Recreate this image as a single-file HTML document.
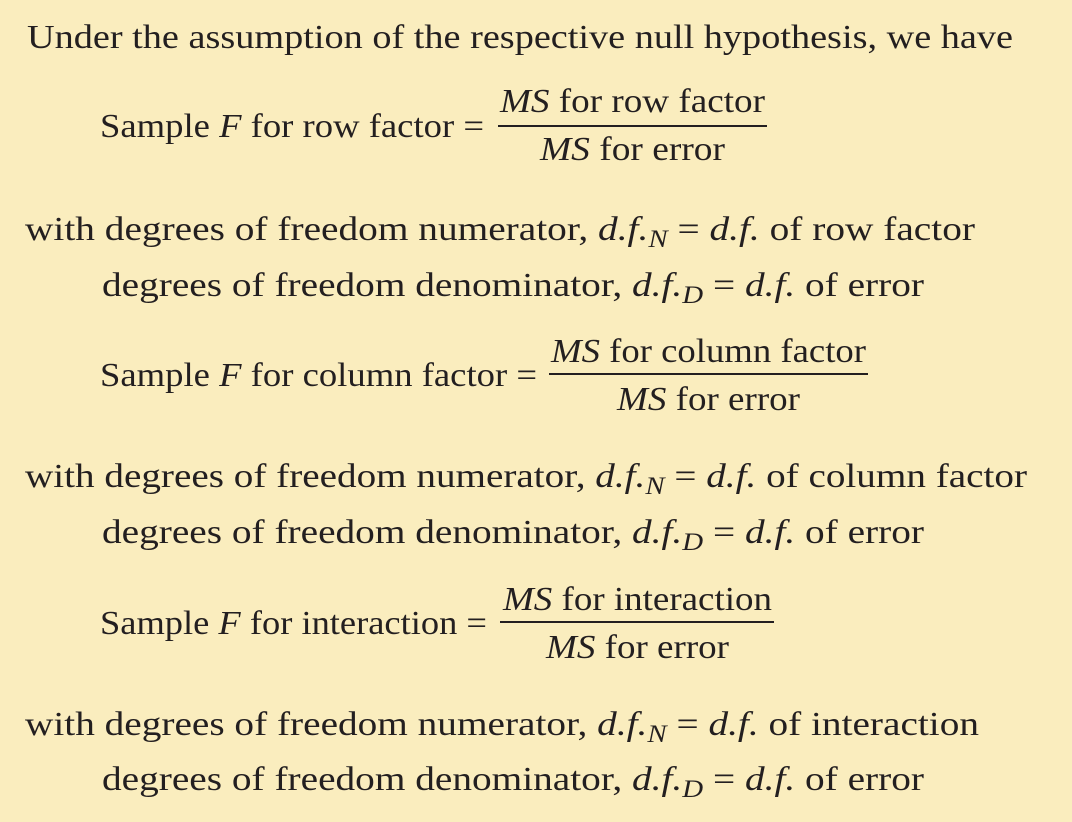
<!DOCTYPE html>
<html><head><meta charset="utf-8"><style>
html,body{margin:0;padding:0;background:#faedbe;}
svg{display:block}
text{font-family:"Liberation Serif",serif;font-size:34px;fill:#231f20}
.i{font-style:italic}
</style></head><body>
<svg width="1072" height="822" xmlns="http://www.w3.org/2000/svg">
<rect width="1072" height="822" fill="#faedbe"/>
<text x="27" y="48" textLength="986" lengthAdjust="spacingAndGlyphs">Under the assumption of the respective null hypothesis, we have</text>

<text x="100" y="137" textLength="384" lengthAdjust="spacingAndGlyphs">Sample <tspan class="i">F</tspan> for row factor =</text>
<text x="500" y="112" textLength="265" lengthAdjust="spacingAndGlyphs"><tspan class="i">MS</tspan> for row factor</text>
<rect x="498" y="125" width="269" height="2" fill="#231f20"/>
<text x="540" y="160" textLength="185" lengthAdjust="spacingAndGlyphs"><tspan class="i">MS</tspan> for error</text>

<text x="25" y="240" textLength="950" lengthAdjust="spacingAndGlyphs">with degrees of freedom numerator, <tspan class="i">d.f.</tspan><tspan class="i" font-size="25" dy="7">N</tspan><tspan dy="-7"> = </tspan><tspan class="i">d.f.</tspan> of row factor</text>
<text x="102" y="296" textLength="822" lengthAdjust="spacingAndGlyphs">degrees of freedom denominator, <tspan class="i">d.f.</tspan><tspan class="i" font-size="25" dy="7">D</tspan><tspan dy="-7"> = </tspan><tspan class="i">d.f.</tspan> of error</text>

<text x="100" y="386" textLength="437" lengthAdjust="spacingAndGlyphs">Sample <tspan class="i">F</tspan> for column factor =</text>
<text x="551" y="362" textLength="315" lengthAdjust="spacingAndGlyphs"><tspan class="i">MS</tspan> for column factor</text>
<rect x="549" y="373" width="319" height="2" fill="#231f20"/>
<text x="617" y="410" textLength="183" lengthAdjust="spacingAndGlyphs"><tspan class="i">MS</tspan> for error</text>

<text x="25" y="487" textLength="1002" lengthAdjust="spacingAndGlyphs">with degrees of freedom numerator, <tspan class="i">d.f.</tspan><tspan class="i" font-size="25" dy="7">N</tspan><tspan dy="-7"> = </tspan><tspan class="i">d.f.</tspan> of column factor</text>
<text x="102" y="543" textLength="822" lengthAdjust="spacingAndGlyphs">degrees of freedom denominator, <tspan class="i">d.f.</tspan><tspan class="i" font-size="25" dy="7">D</tspan><tspan dy="-7"> = </tspan><tspan class="i">d.f.</tspan> of error</text>

<text x="100" y="634" textLength="387" lengthAdjust="spacingAndGlyphs">Sample <tspan class="i">F</tspan> for interaction =</text>
<text x="503" y="610" textLength="269" lengthAdjust="spacingAndGlyphs"><tspan class="i">MS</tspan> for interaction</text>
<rect x="500" y="621" width="274" height="2" fill="#231f20"/>
<text x="546" y="658" textLength="183" lengthAdjust="spacingAndGlyphs"><tspan class="i">MS</tspan> for error</text>

<text x="25" y="735" textLength="954" lengthAdjust="spacingAndGlyphs">with degrees of freedom numerator, <tspan class="i">d.f.</tspan><tspan class="i" font-size="25" dy="7">N</tspan><tspan dy="-7"> = </tspan><tspan class="i">d.f.</tspan> of interaction</text>
<text x="102" y="790" textLength="822" lengthAdjust="spacingAndGlyphs">degrees of freedom denominator, <tspan class="i">d.f.</tspan><tspan class="i" font-size="25" dy="7">D</tspan><tspan dy="-7"> = </tspan><tspan class="i">d.f.</tspan> of error</text>
</svg>
</body></html>
